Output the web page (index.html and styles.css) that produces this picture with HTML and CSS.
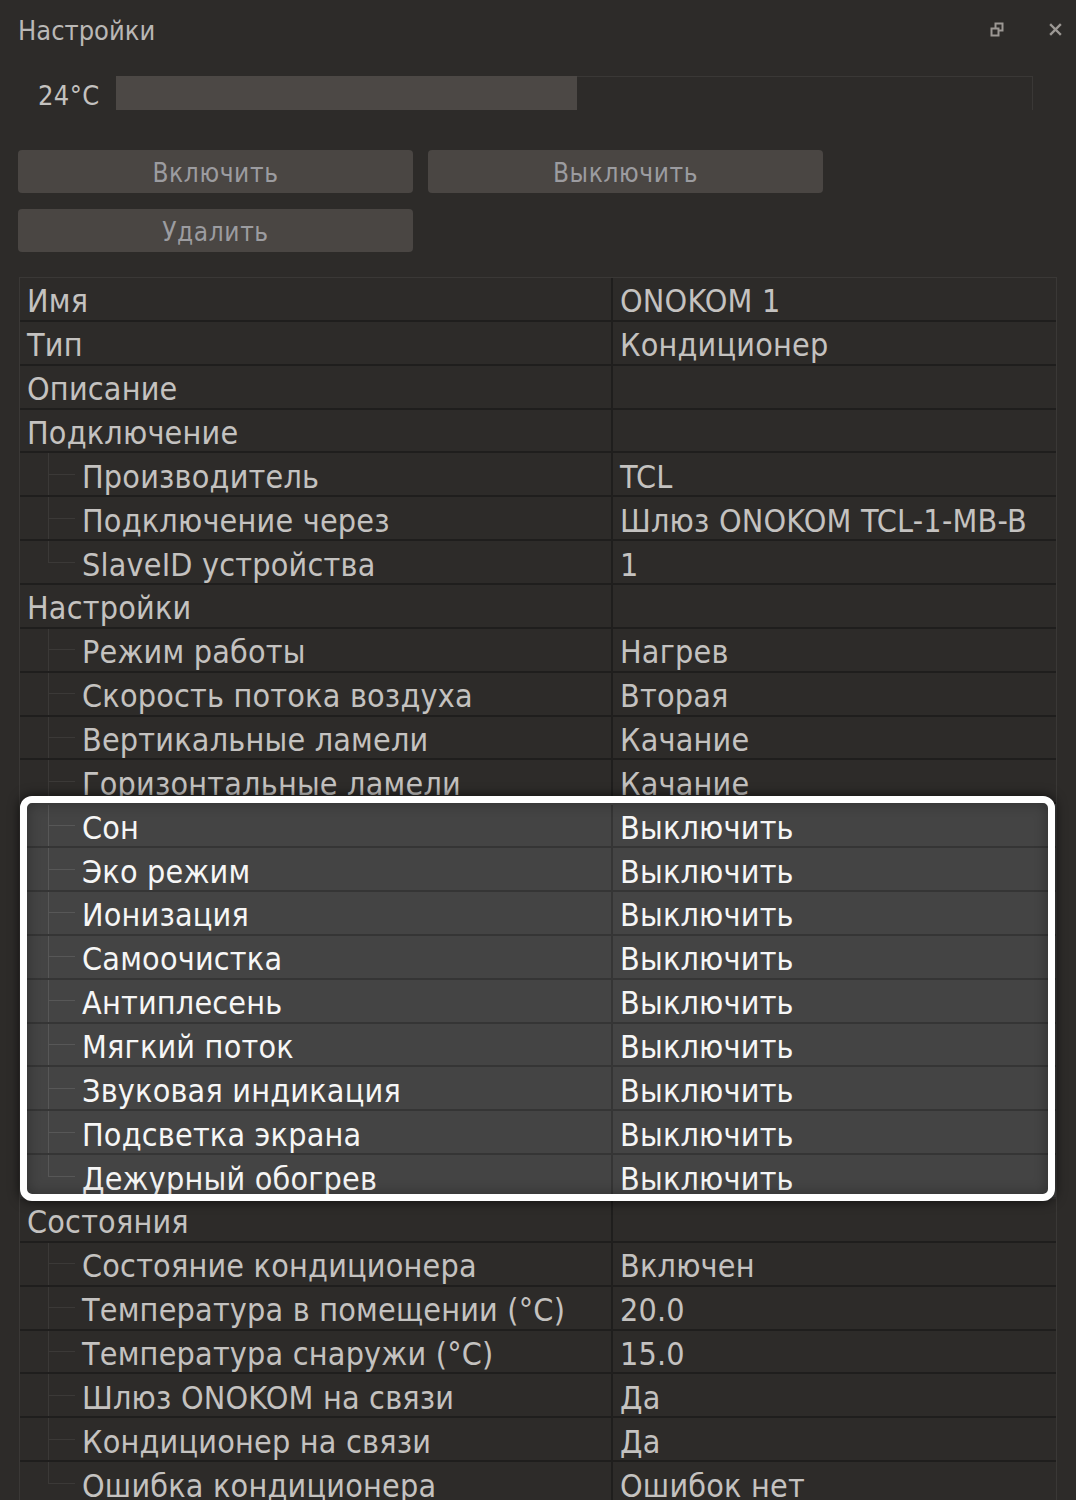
FILE: index.html
```html
<!DOCTYPE html>
<html lang="ru">

<head>
    <meta charset="UTF-8">
    <meta name="viewport" content="width=device-width, initial-scale=1.0">
    <title>Настройки</title>
    <link rel="stylesheet" href="styles.css">
</head>

<body>
    <div class="panel">
        <div class="titlebar">
            <span class="title">Настройки</span>
            <div class="tools">
                <svg class="icon-float" width="14" height="15" viewBox="0 0 14 15">
                    <rect x="5.5" y="1.5" width="7" height="7" fill="none" stroke="#9c9894" stroke-width="2" />
                    <rect x="1" y="6" width="8" height="8" fill="#2d2b29" />
                    <rect x="1.5" y="6.5" width="7" height="7" fill="none" stroke="#9c9894" stroke-width="2" />
                </svg>
                <svg class="icon-close" width="13" height="13" viewBox="0 0 13 13">
                    <path d="M2 2 L11 11 M11 2 L2 11" stroke="#9c9894" stroke-width="2.4" stroke-linecap="square" />
                </svg>
            </div>
        </div>

        <div class="temp-row">
            <span class="temp">24°C</span>
            <div class="track">
                <div class="fill" style="width: 50.3%"></div>
            </div>
        </div>

        <div class="buttons">
            <button class="btn">Включить</button>
            <button class="btn">Выключить</button>
            <button class="btn">Удалить</button>
        </div>

        <div class="props">
            <div class="row"><div class="name">Имя</div><div class="value">ONOKOM 1</div></div>
            <div class="row"><div class="name">Тип</div><div class="value">Кондиционер</div></div>
            <div class="row"><div class="name">Описание</div><div class="value"></div></div>
            <div class="row"><div class="name">Подключение</div><div class="value"></div></div>
            <div class="row child"><div class="name"><span class="branch"></span>Производитель</div><div class="value">TCL</div></div>
            <div class="row child"><div class="name"><span class="branch"></span>Подключение через</div><div class="value">Шлюз ONOKOM TCL-1-MB-B</div></div>
            <div class="row child last"><div class="name"><span class="branch"></span>SlaveID устройства</div><div class="value">1</div></div>
            <div class="row"><div class="name">Настройки</div><div class="value"></div></div>
            <div class="row child"><div class="name"><span class="branch"></span>Режим работы</div><div class="value">Нагрев</div></div>
            <div class="row child"><div class="name"><span class="branch"></span>Скорость потока воздуха</div><div class="value">Вторая</div></div>
            <div class="row child"><div class="name"><span class="branch"></span>Вертикальные ламели</div><div class="value">Качание</div></div>
            <div class="row child"><div class="name"><span class="branch"></span>Горизонтальные ламели</div><div class="value">Качание</div></div>

            <div class="group">
                <div class="row child"><div class="name"><span class="branch"></span>Сон</div><div class="value">Выключить</div></div>
                <div class="row child"><div class="name"><span class="branch"></span>Эко режим</div><div class="value">Выключить</div></div>
                <div class="row child"><div class="name"><span class="branch"></span>Ионизация</div><div class="value">Выключить</div></div>
                <div class="row child"><div class="name"><span class="branch"></span>Самоочистка</div><div class="value">Выключить</div></div>
                <div class="row child"><div class="name"><span class="branch"></span>Антиплесень</div><div class="value">Выключить</div></div>
                <div class="row child"><div class="name"><span class="branch"></span>Мягкий поток</div><div class="value">Выключить</div></div>
                <div class="row child"><div class="name"><span class="branch"></span>Звуковая индикация</div><div class="value">Выключить</div></div>
                <div class="row child"><div class="name"><span class="branch"></span>Подсветка экрана</div><div class="value">Выключить</div></div>
                <div class="row child last"><div class="name"><span class="branch"></span>Дежурный обогрев</div><div class="value">Выключить</div></div>
            </div>

            <div class="row"><div class="name">Состояния</div><div class="value"></div></div>
            <div class="row child"><div class="name"><span class="branch"></span>Состояние кондиционера</div><div class="value">Включен</div></div>
            <div class="row child"><div class="name"><span class="branch"></span>Температура в помещении (°C)</div><div class="value">20.0</div></div>
            <div class="row child"><div class="name"><span class="branch"></span>Температура снаружи (°C)</div><div class="value">15.0</div></div>
            <div class="row child"><div class="name"><span class="branch"></span>Шлюз ONOKOM на связи</div><div class="value">Да</div></div>
            <div class="row child"><div class="name"><span class="branch"></span>Кондиционер на связи</div><div class="value">Да</div></div>
            <div class="row child last"><div class="name"><span class="branch"></span>Ошибка кондиционера</div><div class="value">Ошибок нет</div></div>
        </div>
    </div>
</body>

</html>
```

FILE: styles.css
```css
body {
    margin: 0;
    background: #2d2b29;
    font-family: "DejaVu Sans Condensed", "DejaVu Sans", sans-serif;
    color: #c4c2c0;
    height: 1500px;
    overflow: hidden;
}

.panel {
    padding: 0 19px 0 18px;
}

.titlebar {
    height: 60px;
    display: flex;
    align-items: center;
    justify-content: space-between;
}

.title {
    font-size: 27px;
    color: #bab8b6;
}

.tools {
    display: flex;
    align-items: center;
    gap: 45px;
    margin-right: -5px;
    margin-top: -1px;
}

.temp-row {
    display: flex;
    align-items: center;
    gap: 16px;
    height: 34px;
    margin-top: 16px;
    padding-left: 20px;
    margin-right: 24px;
}

.temp {
    font-size: 27px;
    line-height: 26px;
    letter-spacing: 0.4px;
    color: #c4c2c0;
    width: 62px;
    padding-top: 5px;
    white-space: nowrap;
}

.track {
    flex: 1;
    height: 34px;
    box-sizing: border-box;
    border-top: 1px solid #3a3836;
    border-right: 1px solid #3a3836;
}

.fill {
    height: 34px;
    margin-top: -1px;
    background: #4c4845;
}

.buttons {
    display: grid;
    grid-template-columns: 395px 395px;
    column-gap: 15px;
    row-gap: 16px;
    margin-top: 40px;
}

.btn {
    height: 43px;
    border: none;
    border-radius: 4px;
    background: #4a4643;
    color: #9c9ca0;
    font-family: inherit;
    font-size: 26px;
    letter-spacing: 0.6px;
    padding: 3px 0 0;
}

.props {
    margin-top: 25px;
    margin-left: 1px;
    border-top: 1px solid #3a3836;
    border-left: 1px solid #3a3836;
    border-right: 1px solid #3a3836;
    font-size: 32px;
    letter-spacing: 0.2px;
}

.row {
    display: grid;
    grid-template-columns: 591px 1fr;
    height: 43.87px;
    box-sizing: border-box;
    border-bottom: 2px solid #1f1e1d;
}

.name {
    display: flex;
    align-items: center;
    padding: 5px 0 0 7px;
    white-space: nowrap;
    overflow: hidden;
}

.value {
    display: flex;
    align-items: center;
    border-left: 2px solid #1f1e1d;
    padding: 5px 0 0 7px;
    white-space: nowrap;
    overflow: hidden;
}

.child .name {
    padding-left: 0;
}

.branch {
    align-self: stretch;
    width: 27px;
    margin: -7px 7px -2px 28px;
    background:
        linear-gradient(#3b3937, #3b3937) left top / 1px 100% no-repeat,
        linear-gradient(#3b3937, #3b3937) left center / 100% 1px no-repeat;
}

.last .branch {
    background:
        linear-gradient(#3b3937, #3b3937) left top / 1px 50% no-repeat,
        linear-gradient(#3b3937, #3b3937) left center / 100% 1px no-repeat;
}

.group {
    position: relative;
    background: #444444;
    color: #f6f6f6;
}

.group .row {
    border-bottom-color: #353535;
}

.group .value {
    border-left-color: #353535;
}

.group .branch {
    background:
        linear-gradient(#575757, #575757) left top / 1px 100% no-repeat,
        linear-gradient(#575757, #575757) left center / 100% 1px no-repeat;
}

.group .last .branch {
    background:
        linear-gradient(#575757, #575757) left top / 1px 50% no-repeat,
        linear-gradient(#575757, #575757) left center / 100% 1px no-repeat;
}

/* white frame drawn over the highlighted rows */
.group::after {
    content: "";
    position: absolute;
    top: -8px;
    left: 0;
    right: 1px;
    bottom: -2px;
    border: 7px solid #ffffff;
    border-radius: 12px;
    pointer-events: none;
    background: linear-gradient(#444444 0 2px, transparent 2px) padding-box;
    box-shadow: 0 0 12px rgba(0, 0, 0, 0.7), inset 0 0 14px rgba(0, 0, 0, 0.3);
}
```
